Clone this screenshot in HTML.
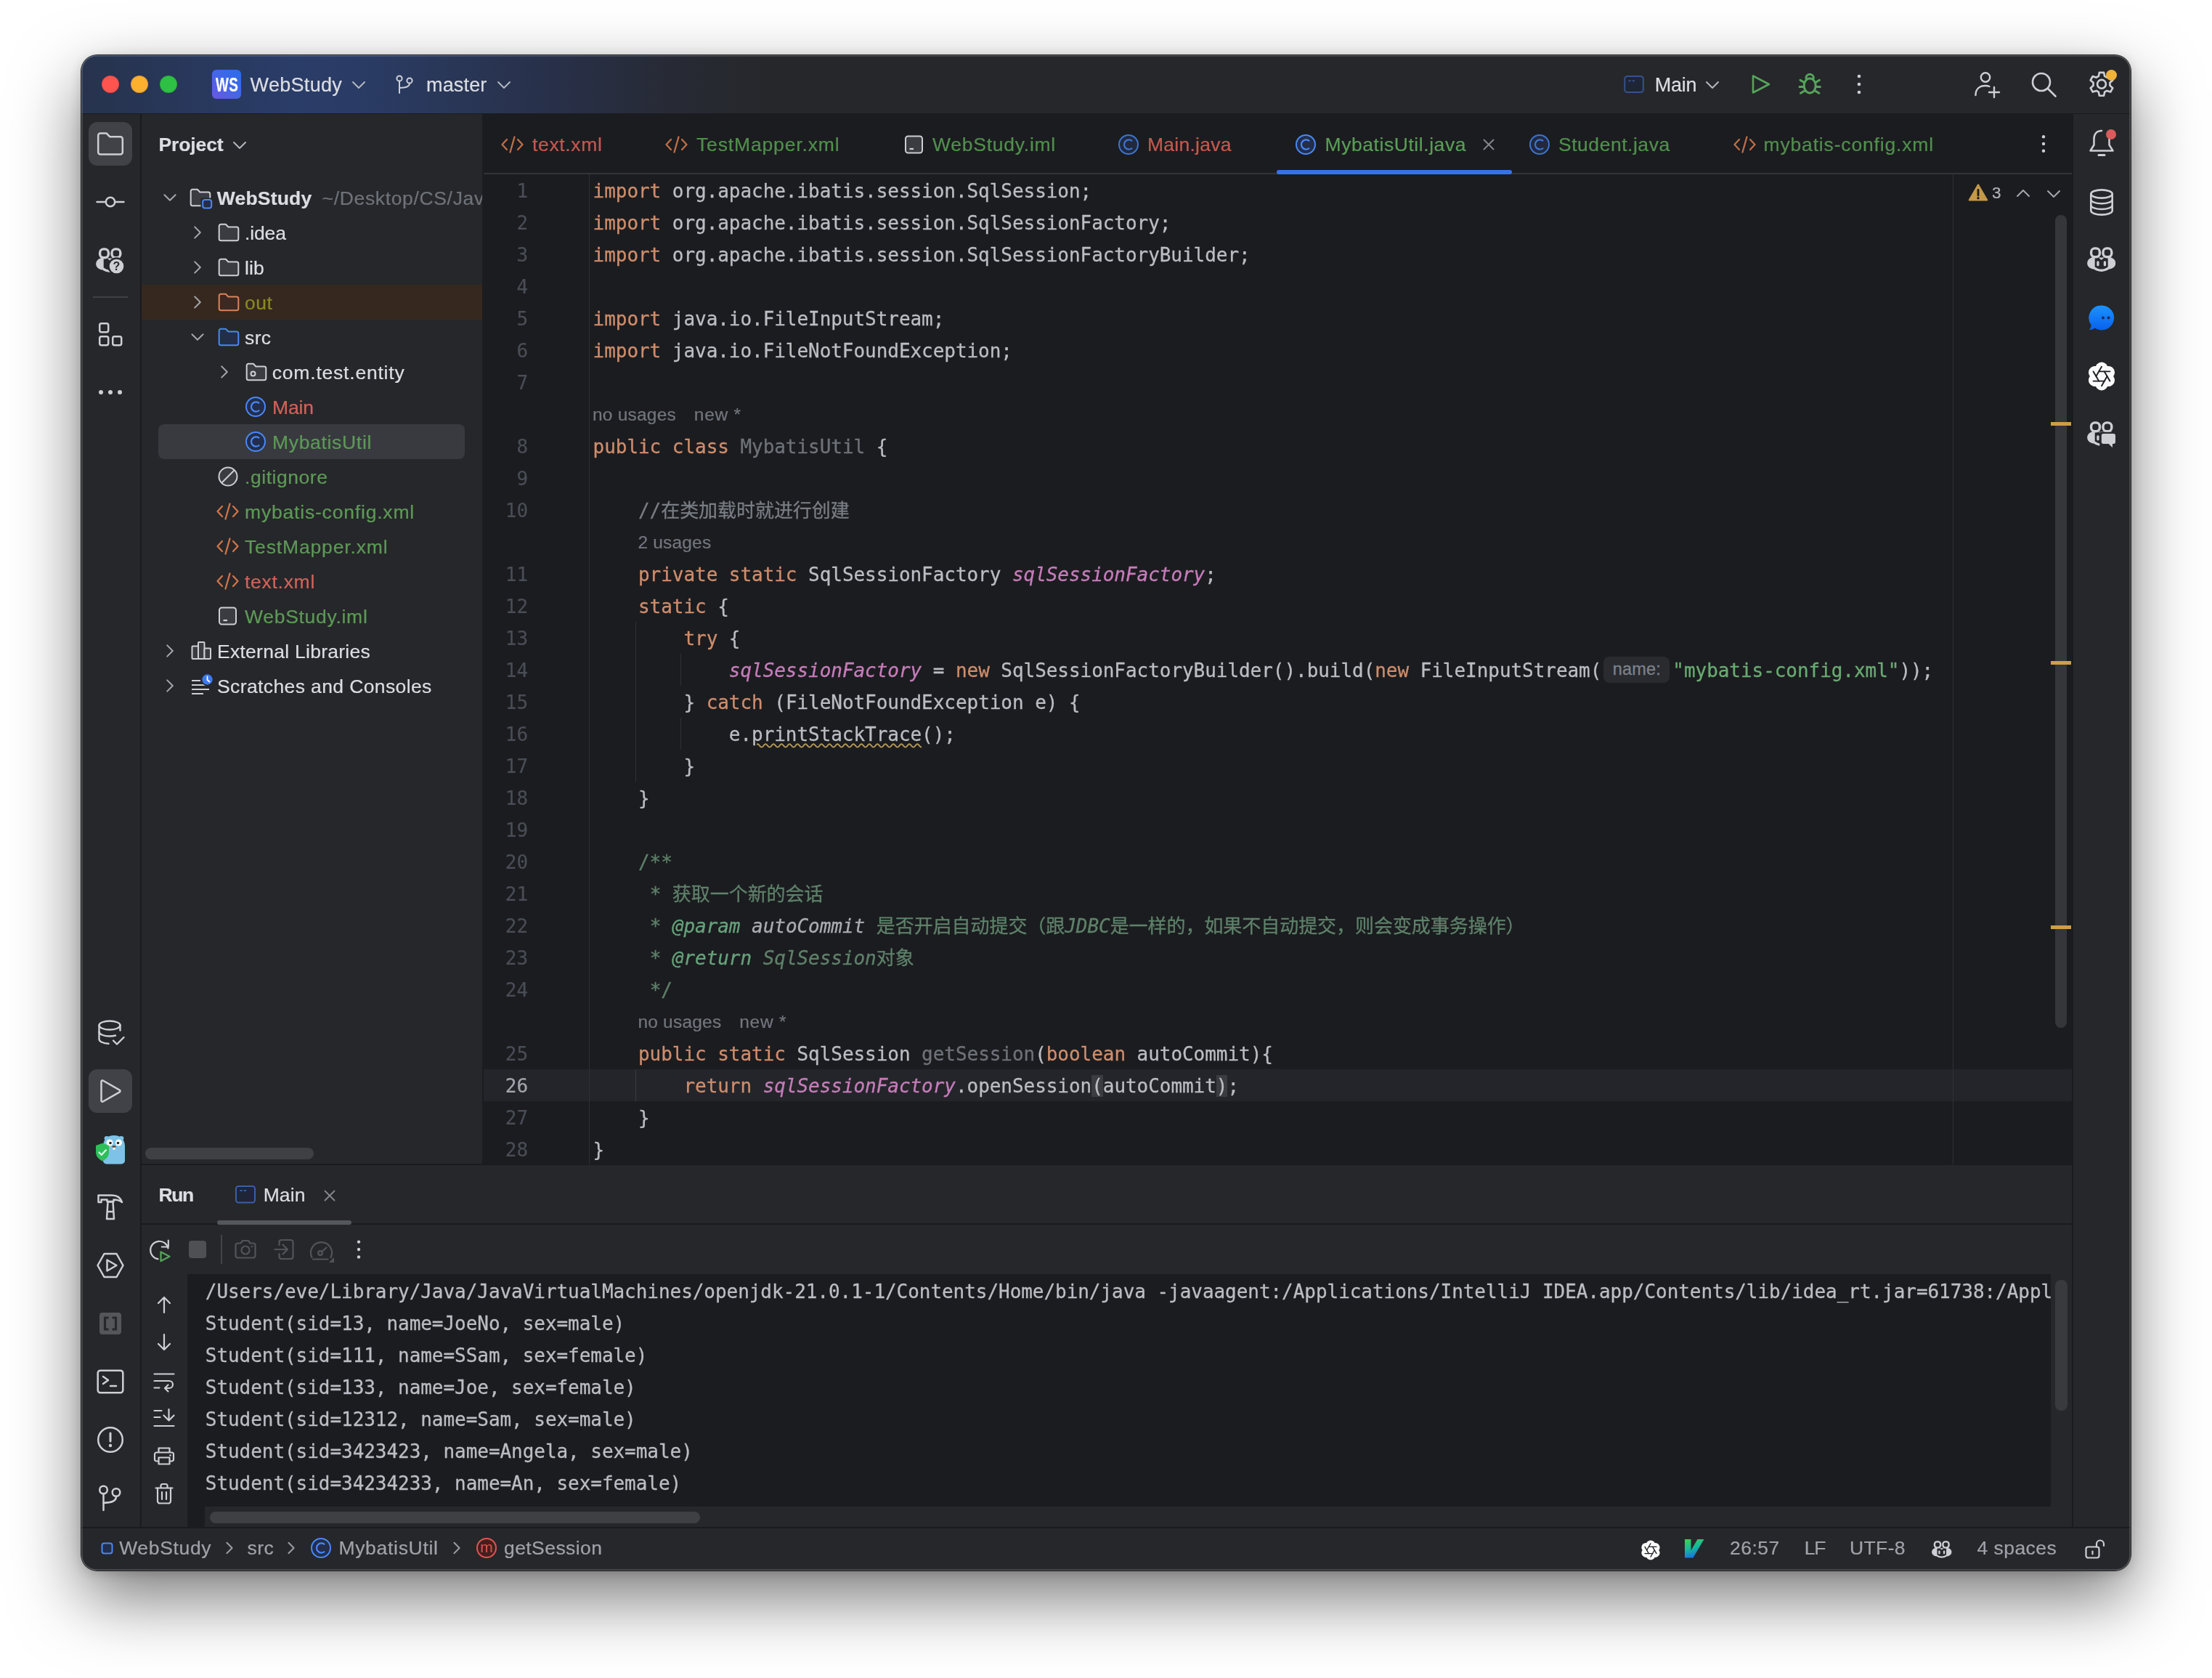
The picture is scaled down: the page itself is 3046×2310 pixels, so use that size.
<!DOCTYPE html>
<html lang="en"><head><meta charset="utf-8"><title>WebStudy – MybatisUtil.java</title>
<style>
html,body{margin:0;padding:0;}
body{width:3046px;height:2310px;overflow:hidden;background:#fff;position:relative;font-family:"Liberation Sans","Noto Sans CJK SC",sans-serif;}
#shadow{position:absolute;left:112px;top:76px;width:2822px;height:2086px;border-radius:22px;
 box-shadow:0 0 0 1px rgba(0,0,0,.85),0 3px 16px rgba(0,0,0,.17),0 38px 94px rgba(0,0,0,.53);}
#win{position:absolute;left:112px;top:76px;width:2822px;height:2086px;border-radius:21px;overflow:hidden;background:#27282b;}
#abs{position:absolute;left:-112px;top:-76px;width:3046px;height:2310px;opacity:.9999;}
.t{position:absolute;white-space:pre;-webkit-text-stroke:.22px;}
.r{position:absolute;display:block;}
.cl{-webkit-text-stroke:.3px;position:absolute;white-space:pre;height:44px;line-height:44px;font-size:26px;letter-spacing:-0.05px;font-family:"DejaVu Sans Mono","Liberation Mono","Noto Sans CJK SC",monospace;color:#bcbec4;}
.k{color:#cf8e6d;}
.s{color:#6aab73;}
.c{color:#7a7e85;}
.d{color:#5f826b;}
.g{color:#67a37c;font-style:italic;}
.dp{color:#abadb3;font-style:italic;}
.di{color:#5f826b;font-style:italic;}
.f{color:#c77dbb;font-style:italic;}
.u{color:#6f737a;}
.w{text-decoration:underline wavy #b59a55 1.5px;text-underline-offset:2.5px;}
.br{background:#3b3d43;}
.hint{display:inline-block;vertical-align:top;width:98px;height:44px;position:relative;}
.hint span{position:absolute;left:3px;top:3px;width:91px;height:36px;line-height:35px;border-radius:8px;background:#2a2c30;color:#7f838b;font-family:"Liberation Sans",sans-serif;font-size:23.5px;letter-spacing:.2px;text-align:center;}
#rim{position:absolute;left:112px;top:76px;width:2822px;height:2086px;border-radius:21px;box-shadow:inset 0 0 0 1.6px rgba(255,255,255,.21);pointer-events:none;}

</style></head>
<body>
<div id="shadow"></div>
<div id="win"><div id="abs">
<div class="r" style="left:112px;top:76px;width:2822px;height:80px;background:linear-gradient(90deg,#28344e 0px,#29385b 140px,#2b3e69 290px,#2b3d67 370px,#2a3859 500px,#29314a 650px,#282b35 820px,#27282b 960px);"></div>
<div class="r" style="left:112px;top:155.5px;width:2822px;height:1.5px;background:#1b1c1f;"></div>
<div class="r" style="left:112px;top:157px;width:81px;height:1946px;background:#27282b;"></div>
<div class="r" style="left:193px;top:157px;width:2px;height:1946px;background:#1b1c1f;"></div>
<div class="r" style="left:195px;top:157px;width:469px;height:1446px;background:#27282b;"></div>
<div class="r" style="left:664px;top:157px;width:2189px;height:1446px;background:#1c1d20;"></div>
<div class="r" style="left:2853px;top:157px;width:2px;height:1946px;background:#1b1c1f;"></div>
<div class="r" style="left:2855px;top:157px;width:79px;height:1946px;background:#27282b;"></div>
<div class="r" style="left:195px;top:1603px;width:2658px;height:500px;background:#27282b;"></div>
<div class="r" style="left:195px;top:1602px;width:2658px;height:2px;background:#1b1c1f;"></div>
<div class="r" style="left:195px;top:1684px;width:2658px;height:2px;background:#1b1c1f;"></div>
<div class="r" style="left:112px;top:2102px;width:2822px;height:2px;background:#1b1c1f;"></div>
<div class="r" style="left:112px;top:2104px;width:2822px;height:58px;background:#27282b;"></div>
<div class="r" style="left:140.0px;top:104.0px;width:24px;height:24px;background:#fe5550;border-radius:50%;box-shadow:inset 0 0 0 1px rgba(0,0,0,.12);"></div>
<div class="r" style="left:180.0px;top:104.0px;width:24px;height:24px;background:#feb12f;border-radius:50%;box-shadow:inset 0 0 0 1px rgba(0,0,0,.12);"></div>
<div class="r" style="left:220.0px;top:104.0px;width:24px;height:24px;background:#2fc146;border-radius:50%;box-shadow:inset 0 0 0 1px rgba(0,0,0,.12);"></div>
<div class="r" style="left:292px;top:96px;width:40px;height:40px;background:linear-gradient(222deg,#2a6eea 0%,#4567e8 50%,#6b58e4 100%);border-radius:6px;"></div>
<span class="t" style="left:296.6px;top:96.6px;font-size:27px;line-height:40px;color:#ffffff;font-weight:bold;transform:scaleX(.70);transform-origin:0 50%;letter-spacing:.5px;">WS</span>
<span class="t" style="left:344.6px;top:96.6px;font-size:27px;line-height:40px;color:#dcdee3;letter-spacing:0.303px;">WebStudy</span>
<svg class="r" style="left:482px;top:105px;" width="24" height="24" viewBox="0 0 24 24" fill="none"><path d="M4.0 8.0 L12 16.0 L20.0 8.0" stroke="#b4b8bf" stroke-width="2" stroke-linecap="round" stroke-linejoin="round"/></svg>
<svg class="r" style="left:541px;top:100px;" width="32" height="32" viewBox="0 0 32 32" fill="none"><g stroke="#cdd0d6" stroke-width="2" fill="none" stroke-linecap="round"><circle cx="9" cy="8" r="3.6"/><circle cx="23" cy="11" r="3.6"/><path d="M9 11.6V28"/><path d="M23 14.6c0 5-5 6-14 6.4"/></g></svg>
<span class="t" style="left:587.0px;top:96.6px;font-size:27px;line-height:40px;color:#dcdee3;letter-spacing:0.161px;">master</span>
<svg class="r" style="left:682px;top:105px;" width="24" height="24" viewBox="0 0 24 24" fill="none"><path d="M4.0 8.0 L12 16.0 L20.0 8.0" stroke="#b4b8bf" stroke-width="2" stroke-linecap="round" stroke-linejoin="round"/></svg>
<svg class="r" style="left:2234px;top:100px;" width="32" height="32" viewBox="0 0 32 32" fill="none"><rect x="3.300" y="5" width="25.500" height="22" rx="3.500" stroke="#36538c" stroke-width="2" fill="#1f2638"/><path d="M8.500 11.200h3.200M13.800 11.200h3.200" stroke="#36538c" stroke-width="2"/></svg>
<span class="t" style="left:2278.8px;top:96.6px;font-size:27px;line-height:40px;color:#dcdee3;letter-spacing:-0.258px;">Main</span>
<svg class="r" style="left:2346px;top:105px;" width="24" height="24" viewBox="0 0 24 24" fill="none"><path d="M4.0 8.0 L12 16.0 L20.0 8.0" stroke="#b4b8bf" stroke-width="2" stroke-linecap="round" stroke-linejoin="round"/></svg>
<svg class="r" style="left:2408px;top:98px;" width="36" height="36" viewBox="0 0 36 36" fill="none"><path d="M6 6.5 L28 18 L6 29.5 Z" stroke="#57a55c" stroke-width="2.6" stroke-linejoin="round" fill="none"/></svg>
<svg class="r" style="left:2472px;top:96px;" width="40" height="40" viewBox="0 0 40 40" fill="none"><g stroke="#57a55c" stroke-width="3" fill="none" stroke-linecap="round"><ellipse cx="20.200" cy="22" rx="8" ry="10"/><path d="M15 11.500a5.200 5.200 0 0 1 10.400 0"/><path d="M12.300 17.500L7 14.300M28.100 17.500l5.300-3.200M12.200 23.500H6M28.200 23.500h6.200M13 29l-5.500 3.300M27.400 29l5.500 3.300"/></g></svg>
<svg class="r" style="left:2554px;top:98px;" width="12" height="36" viewBox="0 0 12 36" fill="none"><g fill="#cdd0d6"><circle cx="6" cy="7" r="2.3"/><circle cx="6" cy="18" r="2.3"/><circle cx="6" cy="29" r="2.3"/></g></svg>
<svg class="r" style="left:2716px;top:96px;" width="40" height="40" viewBox="0 0 40 40" fill="none"><g stroke="#cdd0d6" stroke-width="2.4" fill="none" stroke-linecap="round"><circle cx="18" cy="10.5" r="6.2"/><path d="M4.5 35c0-9 6-13 13.5-13 2 0 4 .3 5.5 1"/><path d="M30 24v14M23 31h14"/></g></svg>
<svg class="r" style="left:2794px;top:96px;" width="40" height="40" viewBox="0 0 40 40" fill="none"><g stroke="#cdd0d6" stroke-width="2.6" fill="none" stroke-linecap="round"><circle cx="17" cy="17" r="12"/><path d="M26 26l10.5 10.5"/></g></svg>
<svg class="r" style="left:2872px;top:95.5px;" width="44" height="44" viewBox="0 0 40 40" fill="none"><g stroke="#cdd0d6" stroke-width="2.4" fill="none" stroke-linejoin="round"><path d="M17.2 3.5h5.6l1 4.6 2.8 1.6 4.5-1.5 2.8 4.9-3.5 3.1v3.6l3.5 3.1-2.8 4.9-4.5-1.5-2.8 1.6-1 4.6h-5.6l-1-4.6-2.8-1.6-4.5 1.5-2.8-4.9 3.5-3.1v-3.6l-3.5-3.1 2.8-4.9 4.5 1.5 2.8-1.6z"/><circle cx="20" cy="18" r="5.4"/></g></svg>
<div class="r" style="left:2899.5px;top:95.5px;width:15px;height:15px;background:#f2b33a;border-radius:50%;"></div>
<div class="r" style="left:122px;top:168px;width:60px;height:60px;background:#414349;border-radius:12px;"></div>
<svg class="r" style="left:132px;top:178px;" width="40" height="40" viewBox="0 0 40 40" fill="none"><path d="M3.2 8.4a3 3 0 0 1 3-3h8.3l4.6 4.8h14.7a3 3 0 0 1 3 3v18.4a3 3 0 0 1-3 3H6.2a3 3 0 0 1-3-3z" stroke="#ced0d6" stroke-width="2.5" stroke-linejoin="round"/></svg>
<svg class="r" style="left:130px;top:262px;" width="44" height="32" viewBox="0 0 44 32" fill="none"><g stroke="#ced0d6" stroke-width="2.5" stroke-linecap="round"><path d="M3.5 16h11.5M29 16h11.5"/><circle cx="22" cy="16" r="6.2"/></g></svg>
<svg class="r" style="left:132px;top:340.5px;" width="40.0" height="36.0" viewBox="0 0 40 36" fill="none"><path d="M9 14C3.600 14.600 .200 18 .200 22.400C.200 26.400 3.400 29.600 9 30.600Z" fill="#ced0d6"/><path d="M30.400 14C35.800 14.600 39.200 18 39.200 22.400C39.200 26.400 36 29.600 30.400 30.600Z" fill="#ced0d6"/><g stroke="#ced0d6" stroke-width="3.400" fill="none" stroke-linejoin="round"><rect x="5.600" y="1.900" width="11.800" height="11.800" rx="5"/><rect x="22" y="1.900" width="11.800" height="11.800" rx="5"/><path d="M9 13V28.300C12.300 31 16 32.300 19.700 32.300C23.400 32.300 27.100 31 30.400 28.300V13" /></g><path d="M15.500 14.500h8.400l-4.200 3.400z" fill="#ced0d6"/><circle cx="28.5" cy="25.5" r="12.2" fill="#27282b"/><circle cx="28.5" cy="25.5" r="9.8" fill="#ced0d6"/><text x="28.5" y="31.4" font-family="Liberation Sans, sans-serif" font-weight="bold" font-size="16" text-anchor="middle" fill="#27282b">?</text></svg>
<div class="r" style="left:128px;top:408px;width:48px;height:2px;background:#404247;"></div>
<svg class="r" style="left:132px;top:440px;" width="40" height="40" viewBox="0 0 40 40" fill="none"><g stroke="#ced0d6" stroke-width="2.5" fill="none"><rect x="5.2" y="5.2" width="12" height="12" rx="2.4"/><rect x="5.2" y="23.2" width="12" height="12" rx="2.4"/><rect x="23.2" y="23.2" width="12" height="12" rx="2.4"/></g></svg>
<svg class="r" style="left:132px;top:530px;" width="40" height="20" viewBox="0 0 40 20" fill="none"><g fill="#ced0d6"><circle cx="7" cy="10" r="3"/><circle cx="20" cy="10" r="3"/><circle cx="33" cy="10" r="3"/></g></svg>
<svg class="r" style="left:132px;top:1402px;" width="44" height="42" viewBox="0 0 44 42" fill="none"><g stroke="#ced0d6" stroke-width="2.4" fill="none" stroke-linecap="round" stroke-linejoin="round"><ellipse cx="19" cy="9.5" rx="14.5" ry="6"/><path d="M4.5 9.5v19c0 3.3 5.5 6 13 6.2"/><path d="M33.5 9.5v7"/><path d="M4.5 18.5c0 3.3 6.5 6 14.5 6 3 0 5.800-.4 8-1"/><path d="M24 30.500l5 5 9.500-9.500"/></g></svg>
<div class="r" style="left:122px;top:1472px;width:60px;height:60px;background:#414349;border-radius:12px;"></div>
<svg class="r" style="left:132px;top:1482px;" width="40" height="40" viewBox="0 0 40 40" fill="none"><path d="M7.500 6.800a1.500 1.500 0 0 1 2.200-1.300l23 13.200a1.500 1.500 0 0 1 0 2.600l-23 13.200a1.500 1.500 0 0 1-2.200-1.300z" stroke="#ced0d6" stroke-width="2.5" stroke-linejoin="round"/></svg>
<svg class="r" style="left:130px;top:1560px;" width="44" height="44" viewBox="0 0 44 44" fill="none"><g><ellipse cx="17" cy="7" rx="3.400" ry="3" fill="#7fc4e8"/><ellipse cx="37" cy="7" rx="3.400" ry="3" fill="#7fc4e8"/><path d="M12 18c0-9 6-15 15-15s15 6 15 15v20c0 3-3 4.500-5 4.500H17c-2.500 0-5-1.500-5-4.500z" fill="#7fc4e8"/><circle cx="21" cy="13" r="4.600" fill="#fff"/><circle cx="33.500" cy="13" r="4.600" fill="#fff"/><circle cx="22" cy="13.500" r="1.800" fill="#222"/><circle cx="32.500" cy="13.500" r="1.800" fill="#222"/><ellipse cx="27" cy="18.600" rx="2.600" ry="1.700" fill="#5a3c2a"/><rect x="25.300" y="19.500" width="3.400" height="3.400" rx="1" fill="#f5f0e6"/><path d="M2 17l9-3.200 9 3.200v9c0 6-4 10-9 12.500C6 36 2 32 2 26z" fill="#2fbf5b"/><path d="M6.500 26.500l3.400 3.200 6-6.400" stroke="#e6fff0" stroke-width="2.200" fill="none" stroke-linecap="round"/></g></svg>
<svg class="r" style="left:132px;top:1641px;" width="40" height="40" viewBox="0 0 40 40" fill="none"><g stroke="#ced0d6" stroke-width="2.500" fill="none" stroke-linejoin="round"><path d="M3.500 4.500h19c7 0 11.500 3.500 13.500 9.500-3.500-2.800-7-3.500-11.500-3.500v2.500h-9v-2.500h-8v3.500h-4z"/><path d="M16.500 13.500h7l1.500 23.500h-10z"/><path d="M15.500 27h9"/></g></svg>
<svg class="r" style="left:131px;top:1722px;" width="42" height="40" viewBox="0 0 42 40" fill="none"><g stroke="#ced0d6" stroke-width="2.500" fill="none" stroke-linejoin="round"><path d="M12.500 4h17l9 16-9 16h-17l-9-16z"/><path d="M16.500 12.500l13 7.500-13 7.500z"/></g></svg>
<div class="r" style="left:137px;top:1807px;width:30px;height:30px;background:#55575b;border-radius:4px;"></div>
<svg class="r" style="left:137px;top:1807px;" width="30" height="30" viewBox="0 0 30 30" fill="none"><g stroke="#27282b" stroke-width="3.200" fill="none"><path d="M12.500 7h-5v16h5"/><path d="M17.500 7h5v16h-5"/></g></svg>
<svg class="r" style="left:132px;top:1882px;" width="40" height="40" viewBox="0 0 40 40" fill="none"><g stroke="#ced0d6" stroke-width="2.500" fill="none" stroke-linecap="round" stroke-linejoin="round"><rect x="2.700" y="4.700" width="34.600" height="30.600" rx="3.500"/><path d="M10 13l7 5-7 5M20 26h8"/></g></svg>
<svg class="r" style="left:132px;top:1962px;" width="40" height="40" viewBox="0 0 40 40" fill="none"><g stroke="#ced0d6" stroke-width="2.500" fill="none" stroke-linecap="round"><circle cx="20" cy="20" r="16.800"/><path d="M20 11v11" stroke-width="3"/></g><circle cx="20" cy="28" r="2.200" fill="#ced0d6"/></svg>
<svg class="r" style="left:132px;top:2042px;" width="40" height="40" viewBox="0 0 40 40" fill="none"><g stroke="#ced0d6" stroke-width="2.500" fill="none" stroke-linecap="round"><circle cx="10.500" cy="9" r="5.300"/><circle cx="28" cy="12.500" r="5.300"/><path d="M10.500 14.500V37"/><path d="M28 18c0 6.500-6 8.500-17.500 9"/></g></svg>
<svg class="r" style="left:2874px;top:176px;" width="40" height="44" viewBox="0 0 40 44" fill="none"><g stroke="#ced0d6" stroke-width="2.500" fill="none" stroke-linecap="round" stroke-linejoin="round"><path d="M20 4C13 4 9.500 9 9.500 15v8.500L4.500 31.500h31l-5-8V15"/><path d="M16 37.500h8" stroke-width="3"/></g></svg>
<div class="r" style="left:2900.0px;top:178.0px;width:14px;height:14px;background:#db5c5c;border-radius:50%;"></div>
<svg class="r" style="left:2874px;top:257px;" width="40" height="44" viewBox="0 0 40 44" fill="none"><g stroke="#ced0d6" stroke-width="2.600" fill="none"><ellipse cx="20" cy="10" rx="14.700" ry="5.600"/><path d="M5.300 10v23a14.700 5.600 0 0 0 29.400 0v-23"/><path d="M5.300 17.700a14.700 5.600 0 0 0 29.400 0"/><path d="M5.300 25.400a14.700 5.600 0 0 0 29.400 0"/></g></svg>
<svg class="r" style="left:2874px;top:340px;" width="40.0" height="36.0" viewBox="0 0 40 36" fill="none"><path d="M9 14C3.600 14.600 .200 18 .200 22.400C.200 26.400 3.400 29.600 9 30.600Z" fill="#ced0d6"/><path d="M30.400 14C35.800 14.600 39.200 18 39.200 22.400C39.200 26.400 36 29.600 30.400 30.600Z" fill="#ced0d6"/><g stroke="#ced0d6" stroke-width="3.400" fill="none" stroke-linejoin="round"><rect x="5.600" y="1.900" width="11.800" height="11.800" rx="5"/><rect x="22" y="1.900" width="11.800" height="11.800" rx="5"/><path d="M9 13V28.300C12.300 31 16 32.300 19.700 32.300C23.400 32.300 27.100 31 30.400 28.300V13" /></g><path d="M15.500 14.500h8.400l-4.200 3.400z" fill="#ced0d6"/><rect x="13.300" y="19.200" width="3.300" height="7.300" rx="1.650" fill="#ced0d6"/><rect x="22.800" y="19.200" width="3.300" height="7.300" rx="1.650" fill="#ced0d6"/></svg>
<svg class="r" style="left:2874px;top:418px;" width="40" height="40" viewBox="0 0 40 40" fill="none"><defs><linearGradient id="gchat" x1="0" y1="0" x2="0" y2="1"><stop offset="0" stop-color="#1c94ff"/><stop offset="1" stop-color="#0a62ee"/></linearGradient></defs><path d="M20 2.500a17 17 0 1 1-9.500 31c-2 1.800-4.500 2.800-7.500 2.500 1.500-1.800 2.500-4 2.700-6.500A17 17 0 0 1 20 2.500z" fill="url(#gchat)"/><circle cx="22" cy="19.500" r="2" fill="#1b2a55"/><circle cx="29.500" cy="19.500" r="2" fill="#1b2a55"/></svg>
<svg class="r" style="left:2874px;top:498px;" width="40" height="40" viewBox="0 0 40 40" fill="none"><circle cx="20" cy="9.400" r="8.800" transform="rotate(0 20 20)" fill="#fbfbfb"/><circle cx="20" cy="9.400" r="8.800" transform="rotate(60 20 20)" fill="#fbfbfb"/><circle cx="20" cy="9.400" r="8.800" transform="rotate(120 20 20)" fill="#fbfbfb"/><circle cx="20" cy="9.400" r="8.800" transform="rotate(180 20 20)" fill="#fbfbfb"/><circle cx="20" cy="9.400" r="8.800" transform="rotate(240 20 20)" fill="#fbfbfb"/><circle cx="20" cy="9.400" r="8.800" transform="rotate(300 20 20)" fill="#fbfbfb"/><circle cx="20" cy="20" r="11" fill="#fbfbfb"/><path d="M27.60 20.00L20.00 33.16" stroke="#1e1f22" stroke-width="1.900" stroke-linecap="round"/><path d="M23.80 26.58L8.60 26.58" stroke="#1e1f22" stroke-width="1.900" stroke-linecap="round"/><path d="M16.20 26.58L8.60 13.42" stroke="#1e1f22" stroke-width="1.900" stroke-linecap="round"/><path d="M12.40 20.00L20.00 6.84" stroke="#1e1f22" stroke-width="1.900" stroke-linecap="round"/><path d="M16.20 13.42L31.40 13.42" stroke="#1e1f22" stroke-width="1.900" stroke-linecap="round"/><path d="M23.80 13.42L31.40 26.58" stroke="#1e1f22" stroke-width="1.900" stroke-linecap="round"/></svg>
<svg class="r" style="left:2874px;top:580px;" width="40.0" height="36.0" viewBox="0 0 40 36" fill="none"><path d="M9 14C3.600 14.600 .200 18 .200 22.400C.200 26.400 3.400 29.600 9 30.600Z" fill="#ced0d6"/><path d="M30.400 14C35.800 14.600 39.200 18 39.200 22.400C39.200 26.400 36 29.600 30.400 30.600Z" fill="#ced0d6"/><g stroke="#ced0d6" stroke-width="3.400" fill="none" stroke-linejoin="round"><rect x="5.600" y="1.900" width="11.800" height="11.800" rx="5"/><rect x="22" y="1.900" width="11.800" height="11.800" rx="5"/><path d="M9 13V28.300C12.300 31 16 32.300 19.700 32.300C23.400 32.300 27.100 31 30.400 28.300V13" /></g><path d="M15.500 14.500h8.400l-4.200 3.400z" fill="#ced0d6"/><rect x="13.300" y="19.200" width="3.300" height="7.300" rx="1.650" fill="#ced0d6"/><rect x="17.300" y="14.800" width="24" height="23" fill="#27282b"/><path d="M19.800 19.500a2.600 2.600 0 0 1 2.600-2.600h14a2.600 2.600 0 0 1 2.600 2.600v8.800a2.600 2.600 0 0 1-2.600 2.600h-1.400v5.300l-5.300-5.300h-7.300a2.600 2.600 0 0 1-2.600-2.600z" fill="#ced0d6"/></svg>
<span class="t" style="left:218.5px;top:179.3px;font-size:26.5px;line-height:40px;color:#dcdee3;font-weight:bold;letter-spacing:-0.121px;">Project</span>
<svg class="r" style="left:318px;top:188px;" width="24" height="24" viewBox="0 0 24 24" fill="none"><path d="M4.0 8.0 L12 16.0 L20.0 8.0" stroke="#b4b8bf" stroke-width="2" stroke-linecap="round" stroke-linejoin="round"/></svg>
<div class="r" style="left:195px;top:392px;width:469px;height:48px;background:#37291f;"></div>
<div class="r" style="left:218px;top:584px;width:422px;height:48px;background:#393b40;border-radius:8px;"></div>
<svg class="r" style="left:222px;top:260.3px;" width="24" height="24" viewBox="0 0 24 24" fill="none"><path d="M4.4 8.2 L12 15.8 L19.6 8.2" stroke="#a5a8af" stroke-width="2" stroke-linecap="round" stroke-linejoin="round"/></svg>
<svg class="r" style="left:260.5px;top:258.3px;" width="34" height="32" viewBox="0 0 34 32" fill="none"><path d="M1.700 5.200a2.500 2.500 0 0 1 2.500-2.500h6.600l3.600 3.800h11.400a2.500 2.500 0 0 1 2.500 2.500v13.800a2.500 2.500 0 0 1-2.500 2.500H4.200a2.500 2.500 0 0 1-2.500-2.500z" stroke="#ced0d6" stroke-width="2" fill="#3b3d42" stroke-linejoin="round"/><rect x="15.500" y="14.500" width="16" height="15" fill="#27282b"/><rect x="18.200" y="17" width="12" height="11.500" rx="3" stroke="#4a88f7" stroke-width="2" fill="#232f4b"/></svg>
<span class="t" style="left:298.8px;top:252.6px;font-size:26.5px;line-height:40px;color:#dcdee3;font-weight:bold;letter-spacing:0.178px;">WebStudy</span>
<div class="r" style="left:440px;top:250px;width:224px;height:46px;overflow:hidden;">
<span class="t" style="left:3.6px;top:2.6px;font-size:26.5px;line-height:40px;color:#6f737a;letter-spacing:.65px;">~/Desktop/CS/Jav</span>
</div>
<svg class="r" style="left:259.5px;top:308.3px;" width="24" height="24" viewBox="0 0 24 24" fill="none"><path d="M8.2 4.4 L15.8 12 L8.2 19.6" stroke="#a5a8af" stroke-width="2" stroke-linecap="round" stroke-linejoin="round"/></svg>
<svg class="r" style="left:299.5px;top:306.3px;" width="34" height="32" viewBox="0 0 34 32" fill="none"><path d="M1.700 5.200a2.500 2.500 0 0 1 2.500-2.500h6.600l3.600 3.800h11.400a2.500 2.500 0 0 1 2.500 2.500v13.800a2.500 2.500 0 0 1-2.500 2.500H4.200a2.500 2.500 0 0 1-2.500-2.500z" stroke="#ced0d6" stroke-width="2" fill="#3b3d42" stroke-linejoin="round"/></svg>
<span class="t" style="left:337.0px;top:300.6px;font-size:26.5px;line-height:40px;color:#dcdee3;letter-spacing:-0.134px;">.idea</span>
<svg class="r" style="left:259.5px;top:356.3px;" width="24" height="24" viewBox="0 0 24 24" fill="none"><path d="M8.2 4.4 L15.8 12 L8.2 19.6" stroke="#a5a8af" stroke-width="2" stroke-linecap="round" stroke-linejoin="round"/></svg>
<svg class="r" style="left:299.5px;top:354.3px;" width="34" height="32" viewBox="0 0 34 32" fill="none"><path d="M1.700 5.200a2.500 2.500 0 0 1 2.500-2.500h6.600l3.600 3.800h11.400a2.500 2.500 0 0 1 2.500 2.500v13.800a2.500 2.500 0 0 1-2.500 2.500H4.200a2.500 2.500 0 0 1-2.500-2.500z" stroke="#ced0d6" stroke-width="2" fill="#3b3d42" stroke-linejoin="round"/></svg>
<span class="t" style="left:337.0px;top:348.6px;font-size:26.5px;line-height:40px;color:#dcdee3;letter-spacing:0.161px;">lib</span>
<svg class="r" style="left:259.5px;top:404.3px;" width="24" height="24" viewBox="0 0 24 24" fill="none"><path d="M8.2 4.4 L15.8 12 L8.2 19.6" stroke="#a5a8af" stroke-width="2" stroke-linecap="round" stroke-linejoin="round"/></svg>
<svg class="r" style="left:299.5px;top:402.3px;" width="34" height="32" viewBox="0 0 34 32" fill="none"><path d="M1.700 5.200a2.500 2.500 0 0 1 2.500-2.500h6.600l3.600 3.800h11.400a2.500 2.500 0 0 1 2.500 2.500v13.800a2.500 2.500 0 0 1-2.500 2.500H4.200a2.500 2.500 0 0 1-2.500-2.500z" stroke="#d9855d" stroke-width="2" fill="#3d2a24" stroke-linejoin="round"/></svg>
<span class="t" style="left:337.0px;top:396.6px;font-size:26.5px;line-height:40px;color:#8a8a22;letter-spacing:0.552px;">out</span>
<svg class="r" style="left:259.5px;top:452.3px;" width="24" height="24" viewBox="0 0 24 24" fill="none"><path d="M4.4 8.2 L12 15.8 L19.6 8.2" stroke="#a5a8af" stroke-width="2" stroke-linecap="round" stroke-linejoin="round"/></svg>
<svg class="r" style="left:299.5px;top:450.3px;" width="34" height="32" viewBox="0 0 34 32" fill="none"><path d="M1.700 5.200a2.500 2.500 0 0 1 2.500-2.500h6.600l3.600 3.800h11.400a2.500 2.500 0 0 1 2.500 2.500v13.800a2.500 2.500 0 0 1-2.500 2.500H4.200a2.500 2.500 0 0 1-2.500-2.500z" stroke="#4a88f7" stroke-width="2" fill="#232f4b" stroke-linejoin="round"/></svg>
<span class="t" style="left:337.0px;top:444.6px;font-size:26.5px;line-height:40px;color:#dcdee3;letter-spacing:0.391px;">src</span>
<svg class="r" style="left:297px;top:500.29999999999995px;" width="24" height="24" viewBox="0 0 24 24" fill="none"><path d="M8.2 4.4 L15.8 12 L8.2 19.6" stroke="#a5a8af" stroke-width="2" stroke-linecap="round" stroke-linejoin="round"/></svg>
<svg class="r" style="left:337.5px;top:498.29999999999995px;" width="34" height="32" viewBox="0 0 34 32" fill="none"><path d="M1.700 5.200a2.500 2.500 0 0 1 2.500-2.500h6.600l3.600 3.800h11.400a2.500 2.500 0 0 1 2.500 2.500v13.800a2.500 2.500 0 0 1-2.500 2.500H4.200a2.500 2.500 0 0 1-2.500-2.500z" stroke="#ced0d6" stroke-width="2" fill="#3b3d42" stroke-linejoin="round"/><circle cx="10.500" cy="16.500" r="3" stroke="#ced0d6" stroke-width="2" fill="none"/></svg>
<span class="t" style="left:374.8px;top:492.6px;font-size:26.5px;line-height:40px;color:#dcdee3;letter-spacing:0.790px;">com.test.entity</span>
<svg class="r" style="left:337px;top:545.3px;" width="30" height="30" viewBox="0 0 30 30" fill="none"><circle cx="15.0" cy="15.0" r="13.0" stroke="#4a88f7" stroke-width="2" fill="#232f4b"/><path d="M20.13 10.26 A6.58 6.58 0 1 0 20.13 19.74" stroke="#4a88f7" stroke-width="2.200" fill="none"/></svg>
<span class="t" style="left:375.0px;top:540.6px;font-size:26.5px;line-height:40px;color:#d2645a;letter-spacing:-0.113px;">Main</span>
<svg class="r" style="left:337px;top:593.3px;" width="30" height="30" viewBox="0 0 30 30" fill="none"><circle cx="15.0" cy="15.0" r="13.0" stroke="#4a88f7" stroke-width="2" fill="#232f4b"/><path d="M20.13 10.26 A6.58 6.58 0 1 0 20.13 19.74" stroke="#4a88f7" stroke-width="2.200" fill="none"/></svg>
<span class="t" style="left:375.0px;top:588.6px;font-size:26.5px;line-height:40px;color:#5e9a58;letter-spacing:0.675px;">MybatisUtil</span>
<svg class="r" style="left:299px;top:641.3px;" width="30" height="30" viewBox="0 0 30 30" fill="none"><circle cx="15" cy="15" r="12.500" stroke="#ced0d6" stroke-width="2" fill="#3b3d42"/><path d="M6.500 23.500l17-17" stroke="#ced0d6" stroke-width="2"/></svg>
<span class="t" style="left:337.0px;top:636.6px;font-size:26.5px;line-height:40px;color:#5e9a58;letter-spacing:0.548px;">.gitignore</span>
<svg class="r" style="left:297px;top:690.3px;" width="34" height="28" viewBox="0 0 34 28" fill="none"><g stroke="#d0764a" stroke-width="2.300" fill="none" stroke-linecap="round" stroke-linejoin="round"><path d="M9 7L2.500 14 9 21"/><path d="M24 7l6.500 7-6.500 7"/><path d="M19.500 3.500l-6 21"/></g></svg>
<span class="t" style="left:337.0px;top:684.6px;font-size:26.5px;line-height:40px;color:#5e9a58;letter-spacing:0.810px;">mybatis-config.xml</span>
<svg class="r" style="left:297px;top:738.3px;" width="34" height="28" viewBox="0 0 34 28" fill="none"><g stroke="#d0764a" stroke-width="2.300" fill="none" stroke-linecap="round" stroke-linejoin="round"><path d="M9 7L2.500 14 9 21"/><path d="M24 7l6.500 7-6.500 7"/><path d="M19.500 3.500l-6 21"/></g></svg>
<span class="t" style="left:337.0px;top:732.6px;font-size:26.5px;line-height:40px;color:#5e9a58;letter-spacing:0.852px;">TestMapper.xml</span>
<svg class="r" style="left:297px;top:786.3px;" width="34" height="28" viewBox="0 0 34 28" fill="none"><g stroke="#d0764a" stroke-width="2.300" fill="none" stroke-linecap="round" stroke-linejoin="round"><path d="M9 7L2.500 14 9 21"/><path d="M24 7l6.500 7-6.500 7"/><path d="M19.500 3.500l-6 21"/></g></svg>
<span class="t" style="left:337.0px;top:780.6px;font-size:26.5px;line-height:40px;color:#d2645a;letter-spacing:0.713px;">text.xml</span>
<svg class="r" style="left:299px;top:834.3px;" width="30" height="28" viewBox="0 0 30 28" fill="none"><rect x="3" y="2.500" width="23" height="23" rx="3.500" stroke="#ced0d6" stroke-width="2" fill="#3b3d42"/><path d="M8.500 20h5.500" stroke="#ced0d6" stroke-width="2.200"/></svg>
<span class="t" style="left:337.0px;top:828.6px;font-size:26.5px;line-height:40px;color:#5e9a58;letter-spacing:0.706px;">WebStudy.iml</span>
<svg class="r" style="left:221.6px;top:884.3px;" width="24" height="24" viewBox="0 0 24 24" fill="none"><path d="M8.2 4.4 L15.8 12 L8.2 19.6" stroke="#a5a8af" stroke-width="2" stroke-linecap="round" stroke-linejoin="round"/></svg>
<svg class="r" style="left:262px;top:881.3px;" width="32" height="30" viewBox="0 0 32 30" fill="none"><g stroke="#ced0d6" stroke-width="2" fill="#3b3d42" stroke-linejoin="round"><rect x="2.500" y="8.500" width="8.500" height="17.500" rx="1"/><rect x="11" y="3" width="8.500" height="23" rx="1"/><rect x="19.500" y="11.500" width="8.500" height="14.500" rx="1"/></g></svg>
<span class="t" style="left:299.0px;top:876.6px;font-size:26.5px;line-height:40px;color:#dcdee3;letter-spacing:0.266px;">External Libraries</span>
<svg class="r" style="left:221.6px;top:932.3px;" width="24" height="24" viewBox="0 0 24 24" fill="none"><path d="M8.2 4.4 L15.8 12 L8.2 19.6" stroke="#a5a8af" stroke-width="2" stroke-linecap="round" stroke-linejoin="round"/></svg>
<svg class="r" style="left:262px;top:927.3px;" width="34" height="34" viewBox="0 0 34 34" fill="none"><g stroke="#ced0d6" stroke-width="2" stroke-linecap="butt"><path d="M2 10h12M2 16h22M2 22h24M2 28h16"/></g><circle cx="23.500" cy="8.500" r="8.800" fill="#27282b"/><circle cx="23.500" cy="8.500" r="7.200" fill="#3d7bef"/><path d="M23.500 4.500v4.500l3 2.500" stroke="#fff" stroke-width="1.800" fill="none" stroke-linecap="round"/></svg>
<span class="t" style="left:299.0px;top:924.6px;font-size:26.5px;line-height:40px;color:#dcdee3;letter-spacing:0.384px;">Scratches and Consoles</span>
<div class="r" style="left:200px;top:1580px;width:232px;height:16px;background:#404145;border-radius:8px;"></div>
<div class="r" style="left:666px;top:238px;width:2187px;height:2px;background:#33353a;"></div>
<svg class="r" style="left:689px;top:185px;" width="34" height="28" viewBox="0 0 34 28" fill="none"><g stroke="#bf7048" stroke-width="2.300" fill="none" stroke-linecap="round" stroke-linejoin="round"><path d="M9 7L2.500 14 9 21"/><path d="M24 7l6.500 7-6.500 7"/><path d="M19.500 3.500l-6 21"/></g></svg>
<span class="t" style="left:733.0px;top:178.8px;font-size:26.5px;line-height:40px;color:#c45a51;letter-spacing:0.650px;">text.xml</span>
<svg class="r" style="left:915px;top:185px;" width="34" height="28" viewBox="0 0 34 28" fill="none"><g stroke="#bf7048" stroke-width="2.300" fill="none" stroke-linecap="round" stroke-linejoin="round"><path d="M9 7L2.500 14 9 21"/><path d="M24 7l6.500 7-6.500 7"/><path d="M19.500 3.500l-6 21"/></g></svg>
<span class="t" style="left:959.0px;top:178.8px;font-size:26.5px;line-height:40px;color:#52904f;letter-spacing:0.852px;">TestMapper.xml</span>
<svg class="r" style="left:1243.5px;top:185px;" width="30" height="28" viewBox="0 0 30 28" fill="none"><rect x="3" y="2.500" width="23" height="23" rx="3.500" stroke="#ced0d6" stroke-width="2" fill="#3b3d42"/><path d="M8.500 20h5.500" stroke="#ced0d6" stroke-width="2.200"/></svg>
<span class="t" style="left:1284.0px;top:178.8px;font-size:26.5px;line-height:40px;color:#52904f;letter-spacing:0.747px;">WebStudy.iml</span>
<svg class="r" style="left:1539px;top:184.0px;" width="30" height="30" viewBox="0 0 30 30" fill="none"><circle cx="15.0" cy="15.0" r="13.0" stroke="#3f74d0" stroke-width="2" fill="#212a40"/><path d="M20.13 10.26 A6.58 6.58 0 1 0 20.13 19.74" stroke="#3f74d0" stroke-width="2.200" fill="none"/></svg>
<span class="t" style="left:1580.0px;top:178.8px;font-size:26.5px;line-height:40px;color:#c45a51;letter-spacing:0.253px;">Main.java</span>
<svg class="r" style="left:1783px;top:184.0px;" width="30" height="30" viewBox="0 0 30 30" fill="none"><circle cx="15.0" cy="15.0" r="13.0" stroke="#4a88f7" stroke-width="2" fill="#232f4b"/><path d="M20.13 10.26 A6.58 6.58 0 1 0 20.13 19.74" stroke="#4a88f7" stroke-width="2.200" fill="none"/></svg>
<span class="t" style="left:1824.5px;top:178.8px;font-size:26.5px;line-height:40px;color:#5a9e58;letter-spacing:0.559px;">MybatisUtil.java</span>
<svg class="r" style="left:2040px;top:189px;" width="20" height="20" viewBox="0 0 20 20" fill="none"><path d="M3.500 3.500l13 13M16.500 3.500l-13 13" stroke="#868a91" stroke-width="1.800" stroke-linecap="round"/></svg>
<div class="r" style="left:1758px;top:234px;width:324px;height:6px;background:#3574f0;border-radius:3px;"></div>
<svg class="r" style="left:2104.5px;top:184.0px;" width="30" height="30" viewBox="0 0 30 30" fill="none"><circle cx="15.0" cy="15.0" r="13.0" stroke="#3f74d0" stroke-width="2" fill="#212a40"/><path d="M20.13 10.26 A6.58 6.58 0 1 0 20.13 19.74" stroke="#3f74d0" stroke-width="2.200" fill="none"/></svg>
<span class="t" style="left:2146.0px;top:178.8px;font-size:26.5px;line-height:40px;color:#52904f;letter-spacing:0.530px;">Student.java</span>
<svg class="r" style="left:2385.5px;top:185px;" width="34" height="28" viewBox="0 0 34 28" fill="none"><g stroke="#bf7048" stroke-width="2.300" fill="none" stroke-linecap="round" stroke-linejoin="round"><path d="M9 7L2.500 14 9 21"/><path d="M24 7l6.500 7-6.500 7"/><path d="M19.500 3.500l-6 21"/></g></svg>
<span class="t" style="left:2428.5px;top:178.8px;font-size:26.5px;line-height:40px;color:#52904f;letter-spacing:0.838px;">mybatis-config.xml</span>
<svg class="r" style="left:2808px;top:180px;" width="12" height="36" viewBox="0 0 12 36" fill="none"><g fill="#cdd0d6"><circle cx="6" cy="8.2" r="2.2"/><circle cx="6" cy="18" r="2.2"/><circle cx="6" cy="27.8" r="2.2"/></g></svg>
<div class="r" style="left:666px;top:1472px;width:2187px;height:44px;background:#25262b;"></div>
<div class="r" style="left:810.5px;top:240px;width:1.5px;height:1363px;background:#2f3135;"></div>
<div class="r" style="left:2688.5px;top:240px;width:1.5px;height:1363px;background:#2f3135;"></div>
<div class="r" style="left:874.5px;top:856px;width:1.5px;height:220px;background:#303236;"></div>
<div class="r" style="left:936.5px;top:900px;width:1.5px;height:44px;background:#303236;"></div>
<div class="r" style="left:936.5px;top:988px;width:1.5px;height:44px;background:#303236;"></div>
<div class="r" style="left:874.5px;top:1472px;width:1.5px;height:44px;background:#3a3c41;"></div>
<span class="t" style="left:711.4px;top:242.8px;font-size:26px;line-height:40px;color:#4a4e57;font-family:'DejaVu Sans Mono','Liberation Mono','Noto Sans CJK SC',monospace;letter-spacing:-0.05px;">1</span>
<div class="cl" style="top:240.6px;left:816.6px;"><span class="k">import</span><span class="p"> org.apache.ibatis.session.SqlSession;</span></div>
<span class="t" style="left:711.4px;top:286.8px;font-size:26px;line-height:40px;color:#4a4e57;font-family:'DejaVu Sans Mono','Liberation Mono','Noto Sans CJK SC',monospace;letter-spacing:-0.05px;">2</span>
<div class="cl" style="top:284.6px;left:816.6px;"><span class="k">import</span><span class="p"> org.apache.ibatis.session.SqlSessionFactory;</span></div>
<span class="t" style="left:711.4px;top:330.8px;font-size:26px;line-height:40px;color:#4a4e57;font-family:'DejaVu Sans Mono','Liberation Mono','Noto Sans CJK SC',monospace;letter-spacing:-0.05px;">3</span>
<div class="cl" style="top:328.6px;left:816.6px;"><span class="k">import</span><span class="p"> org.apache.ibatis.session.SqlSessionFactoryBuilder;</span></div>
<span class="t" style="left:711.4px;top:374.8px;font-size:26px;line-height:40px;color:#4a4e57;font-family:'DejaVu Sans Mono','Liberation Mono','Noto Sans CJK SC',monospace;letter-spacing:-0.05px;">4</span>
<span class="t" style="left:711.4px;top:418.8px;font-size:26px;line-height:40px;color:#4a4e57;font-family:'DejaVu Sans Mono','Liberation Mono','Noto Sans CJK SC',monospace;letter-spacing:-0.05px;">5</span>
<div class="cl" style="top:416.6px;left:816.6px;"><span class="k">import</span><span class="p"> java.io.FileInputStream;</span></div>
<span class="t" style="left:711.4px;top:462.8px;font-size:26px;line-height:40px;color:#4a4e57;font-family:'DejaVu Sans Mono','Liberation Mono','Noto Sans CJK SC',monospace;letter-spacing:-0.05px;">6</span>
<div class="cl" style="top:460.6px;left:816.6px;"><span class="k">import</span><span class="p"> java.io.FileNotFoundException;</span></div>
<span class="t" style="left:711.4px;top:506.8px;font-size:26px;line-height:40px;color:#4a4e57;font-family:'DejaVu Sans Mono','Liberation Mono','Noto Sans CJK SC',monospace;letter-spacing:-0.05px;">7</span>
<span class="t" style="left:816.0px;top:551.3px;font-size:24.5px;line-height:40px;color:#73777f;letter-spacing:0.215px;">no usages</span>
<span class="t" style="left:955.8px;top:551.3px;font-size:24.5px;line-height:40px;color:#73777f;letter-spacing:0.741px;">new *</span>
<span class="t" style="left:711.4px;top:594.8px;font-size:26px;line-height:40px;color:#4a4e57;font-family:'DejaVu Sans Mono','Liberation Mono','Noto Sans CJK SC',monospace;letter-spacing:-0.05px;">8</span>
<div class="cl" style="top:592.6px;left:816.6px;"><span class="k">public class</span><span class="p"> </span><span class="u">MybatisUtil</span><span class="p"> {</span></div>
<span class="t" style="left:711.4px;top:638.8px;font-size:26px;line-height:40px;color:#4a4e57;font-family:'DejaVu Sans Mono','Liberation Mono','Noto Sans CJK SC',monospace;letter-spacing:-0.05px;">9</span>
<span class="t" style="left:695.8px;top:682.8px;font-size:26px;line-height:40px;color:#4a4e57;font-family:'DejaVu Sans Mono','Liberation Mono','Noto Sans CJK SC',monospace;letter-spacing:-0.05px;">10</span>
<div class="cl" style="top:680.6px;left:816.6px;"><span class="p">    </span><span class="c">//在类加载时就进行创建</span></div>
<span class="t" style="left:878.4px;top:727.3px;font-size:24.5px;line-height:40px;color:#73777f;letter-spacing:0.195px;">2 usages</span>
<span class="t" style="left:695.8px;top:770.8px;font-size:26px;line-height:40px;color:#4a4e57;font-family:'DejaVu Sans Mono','Liberation Mono','Noto Sans CJK SC',monospace;letter-spacing:-0.05px;">11</span>
<div class="cl" style="top:768.6px;left:816.6px;"><span class="p">    </span><span class="k">private static</span><span class="p"> SqlSessionFactory </span><span class="f">sqlSessionFactory</span><span class="p">;</span></div>
<span class="t" style="left:695.8px;top:814.8px;font-size:26px;line-height:40px;color:#4a4e57;font-family:'DejaVu Sans Mono','Liberation Mono','Noto Sans CJK SC',monospace;letter-spacing:-0.05px;">12</span>
<div class="cl" style="top:812.6px;left:816.6px;"><span class="p">    </span><span class="k">static</span><span class="p"> {</span></div>
<span class="t" style="left:695.8px;top:858.8px;font-size:26px;line-height:40px;color:#4a4e57;font-family:'DejaVu Sans Mono','Liberation Mono','Noto Sans CJK SC',monospace;letter-spacing:-0.05px;">13</span>
<div class="cl" style="top:856.6px;left:816.6px;"><span class="p">        </span><span class="k">try</span><span class="p"> {</span></div>
<span class="t" style="left:695.8px;top:902.8px;font-size:26px;line-height:40px;color:#4a4e57;font-family:'DejaVu Sans Mono','Liberation Mono','Noto Sans CJK SC',monospace;letter-spacing:-0.05px;">14</span>
<div class="cl" style="top:900.6px;left:816.6px;"><span class="p">            </span><span class="f">sqlSessionFactory</span><span class="p"> = </span><span class="k">new</span><span class="p"> SqlSessionFactoryBuilder().build(</span><span class="k">new</span><span class="p"> FileInputStream(</span><span class="hint"><span>name:</span></span><span class="s">"mybatis-config.xml"</span><span class="p">));</span></div>
<span class="t" style="left:695.8px;top:946.8px;font-size:26px;line-height:40px;color:#4a4e57;font-family:'DejaVu Sans Mono','Liberation Mono','Noto Sans CJK SC',monospace;letter-spacing:-0.05px;">15</span>
<div class="cl" style="top:944.6px;left:816.6px;"><span class="p">        } </span><span class="k">catch</span><span class="p"> (FileNotFoundException e) {</span></div>
<span class="t" style="left:695.8px;top:990.8px;font-size:26px;line-height:40px;color:#4a4e57;font-family:'DejaVu Sans Mono','Liberation Mono','Noto Sans CJK SC',monospace;letter-spacing:-0.05px;">16</span>
<div class="cl" style="top:988.6px;left:816.6px;"><span class="p">            e.</span><span class="w">printStackTrace</span><span class="p">();</span></div>
<span class="t" style="left:695.8px;top:1034.8px;font-size:26px;line-height:40px;color:#4a4e57;font-family:'DejaVu Sans Mono','Liberation Mono','Noto Sans CJK SC',monospace;letter-spacing:-0.05px;">17</span>
<div class="cl" style="top:1032.6px;left:816.6px;"><span class="p">        }</span></div>
<span class="t" style="left:695.8px;top:1078.8px;font-size:26px;line-height:40px;color:#4a4e57;font-family:'DejaVu Sans Mono','Liberation Mono','Noto Sans CJK SC',monospace;letter-spacing:-0.05px;">18</span>
<div class="cl" style="top:1076.6px;left:816.6px;"><span class="p">    }</span></div>
<span class="t" style="left:695.8px;top:1122.8px;font-size:26px;line-height:40px;color:#4a4e57;font-family:'DejaVu Sans Mono','Liberation Mono','Noto Sans CJK SC',monospace;letter-spacing:-0.05px;">19</span>
<span class="t" style="left:695.8px;top:1166.8px;font-size:26px;line-height:40px;color:#4a4e57;font-family:'DejaVu Sans Mono','Liberation Mono','Noto Sans CJK SC',monospace;letter-spacing:-0.05px;">20</span>
<div class="cl" style="top:1164.6px;left:816.6px;"><span class="p">    </span><span class="d">/**</span></div>
<span class="t" style="left:695.8px;top:1210.8px;font-size:26px;line-height:40px;color:#4a4e57;font-family:'DejaVu Sans Mono','Liberation Mono','Noto Sans CJK SC',monospace;letter-spacing:-0.05px;">21</span>
<div class="cl" style="top:1208.6px;left:816.6px;"><span class="p">     </span><span class="d">* 获取一个新的会话</span></div>
<span class="t" style="left:695.8px;top:1254.8px;font-size:26px;line-height:40px;color:#4a4e57;font-family:'DejaVu Sans Mono','Liberation Mono','Noto Sans CJK SC',monospace;letter-spacing:-0.05px;">22</span>
<div class="cl" style="top:1252.6px;left:816.6px;"><span class="p">     </span><span class="d">* </span><span class="g">@param</span><span class="d"> </span><span class="dp">autoCommit</span><span class="d"> 是否开启自动提交（跟</span><span class="di">JDBC</span><span class="d">是一样的，如果不自动提交，则会变成事务操作）</span></div>
<span class="t" style="left:695.8px;top:1298.8px;font-size:26px;line-height:40px;color:#4a4e57;font-family:'DejaVu Sans Mono','Liberation Mono','Noto Sans CJK SC',monospace;letter-spacing:-0.05px;">23</span>
<div class="cl" style="top:1296.6px;left:816.6px;"><span class="p">     </span><span class="d">* </span><span class="g">@return</span><span class="d"> </span><span class="di">SqlSession</span><span class="d">对象</span></div>
<span class="t" style="left:695.8px;top:1342.8px;font-size:26px;line-height:40px;color:#4a4e57;font-family:'DejaVu Sans Mono','Liberation Mono','Noto Sans CJK SC',monospace;letter-spacing:-0.05px;">24</span>
<div class="cl" style="top:1340.6px;left:816.6px;"><span class="p">     </span><span class="d">*/</span></div>
<span class="t" style="left:878.4px;top:1387.3px;font-size:24.5px;line-height:40px;color:#73777f;letter-spacing:0.215px;">no usages</span>
<span class="t" style="left:1018.2px;top:1387.3px;font-size:24.5px;line-height:40px;color:#73777f;letter-spacing:0.741px;">new *</span>
<span class="t" style="left:695.8px;top:1430.8px;font-size:26px;line-height:40px;color:#4a4e57;font-family:'DejaVu Sans Mono','Liberation Mono','Noto Sans CJK SC',monospace;letter-spacing:-0.05px;">25</span>
<div class="cl" style="top:1428.6px;left:816.6px;"><span class="p">    </span><span class="k">public static</span><span class="p"> SqlSession </span><span class="u">getSession</span><span class="p">(</span><span class="k">boolean</span><span class="p"> autoCommit){</span></div>
<span class="t" style="left:695.8px;top:1474.8px;font-size:26px;line-height:40px;color:#a3a6ad;font-family:'DejaVu Sans Mono','Liberation Mono','Noto Sans CJK SC',monospace;letter-spacing:-0.05px;">26</span>
<div class="cl" style="top:1472.6px;left:816.6px;"><span class="p">        </span><span class="k">return</span><span class="p"> </span><span class="f">sqlSessionFactory</span><span class="p">.openSession</span><span class="br">(</span><span class="p">autoCommit</span><span class="br">)</span><span class="p">;</span></div>
<span class="t" style="left:695.8px;top:1518.8px;font-size:26px;line-height:40px;color:#4a4e57;font-family:'DejaVu Sans Mono','Liberation Mono','Noto Sans CJK SC',monospace;letter-spacing:-0.05px;">27</span>
<div class="cl" style="top:1516.6px;left:816.6px;"><span class="p">    }</span></div>
<span class="t" style="left:695.8px;top:1562.8px;font-size:26px;line-height:40px;color:#4a4e57;font-family:'DejaVu Sans Mono','Liberation Mono','Noto Sans CJK SC',monospace;letter-spacing:-0.05px;">28</span>
<div class="cl" style="top:1560.6px;left:816.6px;"><span class="p">}</span></div>
<svg class="r" style="left:2710px;top:252px;" width="28" height="26" viewBox="0 0 28 26" fill="none"><path d="M14 2.200L26.300 23.500H1.700z" fill="#c49a4a" stroke="#c49a4a" stroke-width="2" stroke-linejoin="round"/><path d="M14 9.500v7.500" stroke="#1c1d20" stroke-width="2.800" stroke-linecap="round"/><circle cx="14" cy="20.800" r="1.700" fill="#1c1d20"/></svg>
<span class="t" style="left:2743.0px;top:245.7px;font-size:22.5px;line-height:40px;color:#b0b3ba;">3</span>
<svg class="r" style="left:2774px;top:253.5px;" width="24" height="24" viewBox="0 0 24 24" fill="none"><path d="M4.0 16.0 L12 8.0 L20.0 16.0" stroke="#a5a8af" stroke-width="2" stroke-linecap="round" stroke-linejoin="round"/></svg>
<svg class="r" style="left:2816px;top:254.5px;" width="24" height="24" viewBox="0 0 24 24" fill="none"><path d="M4.0 8.0 L12 16.0 L20.0 8.0" stroke="#a5a8af" stroke-width="2" stroke-linecap="round" stroke-linejoin="round"/></svg>
<div class="r" style="left:2830px;top:296px;width:16px;height:1119px;background:#36373b;border-radius:8px;"></div>
<div class="r" style="left:2824px;top:581px;width:28px;height:5px;background:#cfa048;"></div>
<div class="r" style="left:2824px;top:909.5px;width:28px;height:5px;background:#cfa048;"></div>
<div class="r" style="left:2824px;top:1273.5px;width:28px;height:5px;background:#cfa048;"></div>
<span class="t" style="left:218.4px;top:1625.0px;font-size:26.5px;line-height:40px;color:#dcdee3;font-weight:bold;letter-spacing:-1.339px;">Run</span>
<svg class="r" style="left:322px;top:1628px;" width="32" height="32" viewBox="0 0 32 32" fill="none"><rect x="3" y="5" width="26" height="22.500" rx="3.500" stroke="#3c60a6" stroke-width="2" fill="#1f2638"/><path d="M8.500 11h3.200M13.800 11h3.200" stroke="#3c60a6" stroke-width="2"/></svg>
<span class="t" style="left:362.7px;top:1625.0px;font-size:26.5px;line-height:40px;color:#dcdee3;letter-spacing:0.087px;">Main</span>
<svg class="r" style="left:444px;top:1636px;" width="20" height="20" viewBox="0 0 20 20" fill="none"><path d="M3.500 3.500l13 13M16.500 3.500l-13 13" stroke="#868a91" stroke-width="1.800" stroke-linecap="round"/></svg>
<div class="r" style="left:298.5px;top:1680px;width:185px;height:6px;background:#55585e;border-radius:3px;"></div>
<svg class="r" style="left:203px;top:1703px;" width="36" height="36" viewBox="0 0 36 36" fill="none"><g fill="none" stroke-linecap="round" stroke-linejoin="round"><path d="M14.500 30.200A12.300 12.300 0 1 1 28.500 15.500" stroke="#ced0d6" stroke-width="2.200"/><path d="M28.800 4.500v9h-9" stroke="#ced0d6" stroke-width="2.200"/><path d="M18.500 20.500l12 6.300-12 6.300z" stroke="#57a55c" stroke-width="2.300"/></g></svg>
<div class="r" style="left:260px;top:1708px;width:24px;height:24px;background:#4f5155;border-radius:4px;"></div>
<div class="r" style="left:304.3px;top:1700px;width:1.5px;height:40px;background:#43454a;"></div>
<svg class="r" style="left:320px;top:1702px;" width="36" height="36" viewBox="0 0 36 36" fill="none"><g stroke="#53555a" stroke-width="2.200" fill="none" stroke-linejoin="round"><path d="M4.500 12.500a3 3 0 0 1 3-3h4l2.500-3.500h8l2.500 3.500h4a3 3 0 0 1 3 3v14a3 3 0 0 1-3 3h-21a3 3 0 0 1-3-3z"/><circle cx="18" cy="19" r="5.500"/></g><circle cx="27" cy="14" r="1.300" fill="#53555a"/></svg>
<svg class="r" style="left:374px;top:1702px;" width="36" height="36" viewBox="0 0 36 36" fill="none"><g stroke="#53555a" stroke-width="2.200" fill="none" stroke-linecap="round" stroke-linejoin="round"><path d="M10.500 12V8a3 3 0 0 1 3-3h13a3 3 0 0 1 3 3v20a3 3 0 0 1-3 3h-13a3 3 0 0 1-3-3v-4"/><path d="M4.500 18h17M15.500 11.500l6.500 6.500-6.500 6.500"/></g></svg>
<svg class="r" style="left:424px;top:1704px;" width="40" height="36" viewBox="0 0 40 36" fill="none"><g stroke="#53555a" stroke-width="2.200" fill="none" stroke-linecap="round"><path d="M7 29.500h20.500M5.500 27A14.500 14.500 0 1 1 31.500 27"/><circle cx="17" cy="21" r="2.800"/><path d="M19.200 19l6.300-5.500"/></g><path d="M36 27v7h-7z" fill="#53555a"/></svg>
<svg class="r" style="left:487.7px;top:1702.3px;" width="12" height="36" viewBox="0 0 12 36" fill="none"><g fill="#cdd0d6"><circle cx="6" cy="7.6" r="2.2"/><circle cx="6" cy="18" r="2.2"/><circle cx="6" cy="28.4" r="2.2"/></g></svg>
<div class="r" style="left:258px;top:1754px;width:2566px;height:320px;background:#1c1d20;"></div>
<div class="r" style="left:258px;top:2074px;width:24px;height:29px;background:#1c1d20;"></div>
<div class="r" style="left:2830px;top:1762px;width:16.5px;height:180px;background:#3a3b3f;border-radius:8px;"></div>
<div class="r" style="left:288.5px;top:2080.5px;width:675px;height:16px;background:#404145;border-radius:8px;"></div>
<svg class="r" style="left:212px;top:1782px;" width="28" height="28" viewBox="0 0 28 28" fill="none"><path d="M14 25V4M6 12l8-8 8 8" stroke="#ced0d6" stroke-width="2.200" fill="none" stroke-linecap="round" stroke-linejoin="round"/></svg>
<svg class="r" style="left:212px;top:1834px;" width="28" height="28" viewBox="0 0 28 28" fill="none"><path d="M14 3v21M6 16l8 8 8-8" stroke="#ced0d6" stroke-width="2.200" fill="none" stroke-linecap="round" stroke-linejoin="round"/></svg>
<svg class="r" style="left:210px;top:1886px;" width="32" height="32" viewBox="0 0 32 32" fill="none"><g stroke="#ced0d6" stroke-width="2.200" fill="none" stroke-linecap="round" stroke-linejoin="round"><path d="M2.500 5.500h27M2.500 15h20.500a5 5 0 0 1 0 10H17.500M2.500 24.500h7"/><path d="M21.500 20.500l-4.500 4.500 4.500 4.500"/></g></svg>
<svg class="r" style="left:210px;top:1937px;" width="32" height="30" viewBox="0 0 32 30" fill="none"><g stroke="#ced0d6" stroke-width="2.200" fill="none" stroke-linecap="round" stroke-linejoin="round"><path d="M2.500 5h10M2.500 14h8M2.500 26h27"/><path d="M22.500 3v15M15.500 11.500l7 7 7-7"/></g></svg>
<svg class="r" style="left:210px;top:1988px;" width="32" height="32" viewBox="0 0 32 32" fill="none"><g stroke="#ced0d6" stroke-width="2.200" fill="none" stroke-linejoin="round"><path d="M8.500 11.500v-6h15v6"/><path d="M8.500 23.500h-3a2.500 2.500 0 0 1-2.500-2.500v-7a2.500 2.500 0 0 1 2.500-2.500h21a2.500 2.500 0 0 1 2.500 2.500v7a2.500 2.500 0 0 1-2.500 2.500h-3"/><rect x="8.500" y="18.500" width="15" height="9"/></g><circle cx="24.500" cy="15.500" r="1.300" fill="#ced0d6"/></svg>
<svg class="r" style="left:211px;top:2040px;" width="30" height="32" viewBox="0 0 30 32" fill="none"><g stroke="#ced0d6" stroke-width="2.200" fill="none" stroke-linecap="round" stroke-linejoin="round"><path d="M3.500 8.500h23M10.500 8V5.500a2.500 2.500 0 0 1 2.500-2.500h4a2.500 2.500 0 0 1 2.500 2.500V8"/><path d="M6 8.500v18a3 3 0 0 0 3 3h12a3 3 0 0 0 3-3v-18"/><path d="M12 14v10M18 14v10"/></g></svg>
<div class="cl" style="top:1756.2px;left:282.8px;">/Users/eve/Library/Java/JavaVirtualMachines/openjdk-21.0.1-1/Contents/Home/bin/java -javaagent:/Applications/IntelliJ IDEA.app/Contents/lib/idea_rt.jar=61738:/Appl</div>
<div class="cl" style="top:1800.2px;left:282.8px;">Student(sid=13, name=JoeNo, sex=male)</div>
<div class="cl" style="top:1844.2px;left:282.8px;">Student(sid=111, name=SSam, sex=female)</div>
<div class="cl" style="top:1888.2px;left:282.8px;">Student(sid=133, name=Joe, sex=female)</div>
<div class="cl" style="top:1932.2px;left:282.8px;">Student(sid=12312, name=Sam, sex=male)</div>
<div class="cl" style="top:1976.2px;left:282.8px;">Student(sid=3423423, name=Angela, sex=male)</div>
<div class="cl" style="top:2020.2px;left:282.8px;">Student(sid=34234233, name=An, sex=female)</div>
<svg class="r" style="left:138px;top:2122px;" width="20" height="20" viewBox="0 0 20 20" fill="none"><rect x="2.500" y="2.500" width="14" height="14" rx="3" stroke="#4a88f0" stroke-width="2" fill="#232f4b"/></svg>
<span class="t" style="left:164.2px;top:2110.8px;font-size:26.5px;line-height:40px;color:#a0a3aa;letter-spacing:0.652px;">WebStudy</span>
<svg class="r" style="left:304px;top:2119px;" width="24" height="24" viewBox="0 0 24 24" fill="none"><path d="M8.4 4.8 L15.6 12 L8.4 19.2" stroke="#9a9da4" stroke-width="2" stroke-linecap="round" stroke-linejoin="round"/></svg>
<span class="t" style="left:340.6px;top:2110.8px;font-size:26.5px;line-height:40px;color:#a0a3aa;letter-spacing:0.391px;">src</span>
<svg class="r" style="left:389px;top:2119px;" width="24" height="24" viewBox="0 0 24 24" fill="none"><path d="M8.4 4.8 L15.6 12 L8.4 19.2" stroke="#9a9da4" stroke-width="2" stroke-linecap="round" stroke-linejoin="round"/></svg>
<svg class="r" style="left:427px;top:2116.0px;" width="30" height="30" viewBox="0 0 30 30" fill="none"><circle cx="15.0" cy="15.0" r="13.0" stroke="#4a88f7" stroke-width="2" fill="#232f4b"/><path d="M20.13 10.26 A6.58 6.58 0 1 0 20.13 19.74" stroke="#4a88f7" stroke-width="2.200" fill="none"/></svg>
<span class="t" style="left:466.4px;top:2110.8px;font-size:26.5px;line-height:40px;color:#a0a3aa;letter-spacing:0.702px;">MybatisUtil</span>
<svg class="r" style="left:617px;top:2119px;" width="24" height="24" viewBox="0 0 24 24" fill="none"><path d="M8.4 4.8 L15.6 12 L8.4 19.2" stroke="#9a9da4" stroke-width="2" stroke-linecap="round" stroke-linejoin="round"/></svg>
<svg class="r" style="left:654.5px;top:2116.0px;" width="30" height="30" viewBox="0 0 30 30" fill="none"><circle cx="15.0" cy="15.0" r="13.0" stroke="#e0554f" stroke-width="2" fill="#45201f"/><text x="15.0" y="20.7" font-family="Liberation Sans, sans-serif" font-size="21" text-anchor="middle" fill="#e0554f">m</text></svg>
<span class="t" style="left:694.0px;top:2110.8px;font-size:26.5px;line-height:40px;color:#a0a3aa;letter-spacing:0.428px;">getSession</span>
<svg class="r" style="left:2259px;top:2119.5px;" width="28" height="28" viewBox="0 0 40 40" fill="none"><circle cx="20" cy="9.400" r="8.800" transform="rotate(0 20 20)" fill="#fbfbfb"/><circle cx="20" cy="9.400" r="8.800" transform="rotate(60 20 20)" fill="#fbfbfb"/><circle cx="20" cy="9.400" r="8.800" transform="rotate(120 20 20)" fill="#fbfbfb"/><circle cx="20" cy="9.400" r="8.800" transform="rotate(180 20 20)" fill="#fbfbfb"/><circle cx="20" cy="9.400" r="8.800" transform="rotate(240 20 20)" fill="#fbfbfb"/><circle cx="20" cy="9.400" r="8.800" transform="rotate(300 20 20)" fill="#fbfbfb"/><circle cx="20" cy="20" r="11" fill="#fbfbfb"/><path d="M27.60 20.00L20.00 33.16" stroke="#1e1f22" stroke-width="1.900" stroke-linecap="round"/><path d="M23.80 26.58L8.60 26.58" stroke="#1e1f22" stroke-width="1.900" stroke-linecap="round"/><path d="M16.20 26.58L8.60 13.42" stroke="#1e1f22" stroke-width="1.900" stroke-linecap="round"/><path d="M12.40 20.00L20.00 6.84" stroke="#1e1f22" stroke-width="1.900" stroke-linecap="round"/><path d="M16.20 13.42L31.40 13.42" stroke="#1e1f22" stroke-width="1.900" stroke-linecap="round"/><path d="M23.80 13.42L31.40 26.58" stroke="#1e1f22" stroke-width="1.900" stroke-linecap="round"/></svg>
<svg class="r" style="left:2319px;top:2118px;" width="30" height="28" viewBox="0 0 30 28" fill="none"><defs><linearGradient id="gv" x1="0.100" y1="0" x2="0.450" y2="1"><stop offset="0" stop-color="#38d457"/><stop offset=".500" stop-color="#19b99b"/><stop offset="1" stop-color="#1a6fe8"/></linearGradient></defs><path d="M1 1h8.500v15.500L18.500 1H27.500L12.500 26.500H1z" fill="url(#gv)"/></svg>
<span class="t" style="left:2382.0px;top:2110.8px;font-size:26.5px;line-height:40px;color:#a0a3aa;letter-spacing:0.474px;">26:57</span>
<span class="t" style="left:2484.7px;top:2110.8px;font-size:26.5px;line-height:40px;color:#a0a3aa;letter-spacing:-1.219px;">LF</span>
<span class="t" style="left:2547.0px;top:2110.8px;font-size:26.5px;line-height:40px;color:#a0a3aa;letter-spacing:0.384px;">UTF-8</span>
<svg class="r" style="left:2660px;top:2120.5px;" width="28.0" height="25.2" viewBox="0 0 40 36" fill="none"><path d="M9 14C3.600 14.600 .200 18 .200 22.400C.200 26.400 3.400 29.600 9 30.600Z" fill="#cdd0d6"/><path d="M30.400 14C35.800 14.600 39.200 18 39.200 22.400C39.200 26.400 36 29.600 30.400 30.600Z" fill="#cdd0d6"/><g stroke="#cdd0d6" stroke-width="3.400" fill="none" stroke-linejoin="round"><rect x="5.600" y="1.900" width="11.800" height="11.800" rx="5"/><rect x="22" y="1.900" width="11.800" height="11.800" rx="5"/><path d="M9 13V28.300C12.300 31 16 32.300 19.700 32.300C23.400 32.300 27.100 31 30.400 28.300V13" /></g><path d="M15.500 14.500h8.400l-4.200 3.400z" fill="#cdd0d6"/><rect x="13.300" y="19.200" width="3.300" height="7.300" rx="1.650" fill="#cdd0d6"/><rect x="22.800" y="19.200" width="3.300" height="7.300" rx="1.650" fill="#cdd0d6"/></svg>
<span class="t" style="left:2722.6px;top:2110.8px;font-size:26.5px;line-height:40px;color:#a0a3aa;letter-spacing:0.428px;">4 spaces</span>
<svg class="r" style="left:2869px;top:2115.5px;" width="32" height="32" viewBox="0 0 32 32" fill="none"><g stroke="#cdd0d6" stroke-width="2.200" fill="none" stroke-linecap="round"><rect x="3.500" y="13.500" width="18" height="15" rx="3"/><path d="M18 13.500V9.500a5 5 0 0 1 10 0v2.500"/><path d="M12.500 19.500v4"/></g></svg>
</div></div>
<div id="rim"></div>
</body></html>
